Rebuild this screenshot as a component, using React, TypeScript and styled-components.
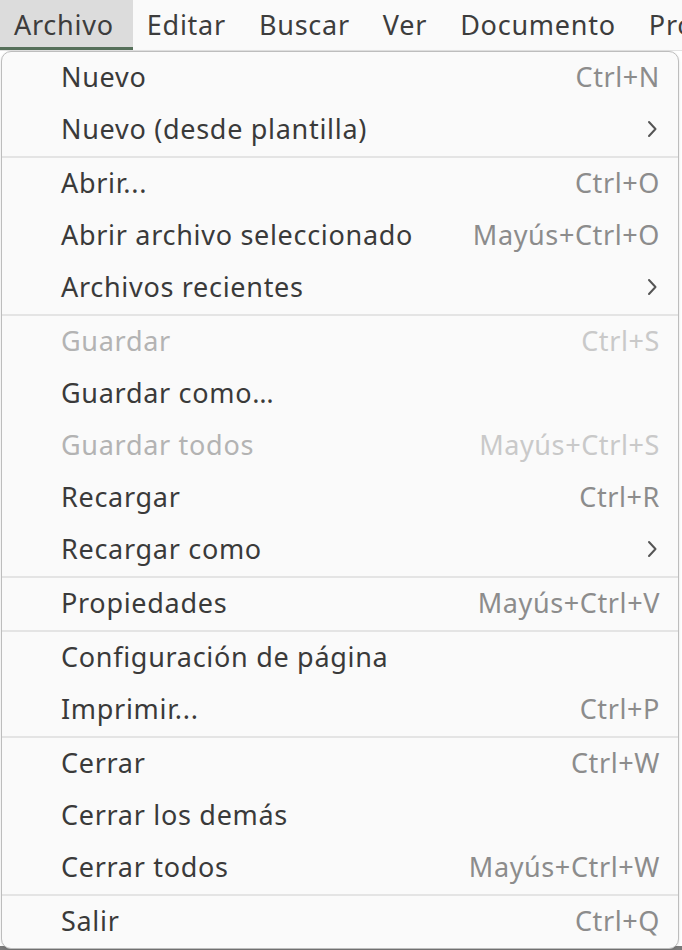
import React from 'react'
import styled, { createGlobalStyle } from 'styled-components'

const GlobalStyle = createGlobalStyle`
  html, body {
    margin: 0;
    padding: 0;
    background: #fafafa;
  }
  body {
    font-family: "Noto Sans", "Open Sans", sans-serif;
    -webkit-font-smoothing: antialiased;
  }
`

const Window = styled.div`
  position: relative;
  width: 682px;
  height: 950px;
  overflow: hidden;
  background: #fafafa;
  display: flex;
  flex-direction: column;
`

const MenuBar = styled.div`
  height: 50px;
  display: flex;
  align-items: stretch;
  background: #fafafa;
  flex-shrink: 0;
`

const BarItem = styled.div<{ $active?: boolean }>`
  display: flex;
  align-items: center;
  padding: 0 19px 2px 14px;
  font-size: 27px;
  letter-spacing: 0.75px;
  color: #3d3d3d;
  white-space: nowrap;
  background: ${(p) => (p.$active ? '#dcdcdc' : 'transparent')};
  box-shadow: ${(p) => (p.$active ? 'inset 0 -3px 0 #56705a' : 'none')};
`

const Content = styled.div`
  flex: 1;
  background: #ffffff;
  border-top: 1px solid #e2e2e2;
  display: flex;
  flex-direction: column;
  justify-content: flex-end;
`

const StatusStrip = styled.div`
  height: 4px;
  background: #7a7a7a;
`

const Menu = styled.div`
  position: absolute;
  top: 51px;
  left: 1px;
  width: 678px;
  box-sizing: border-box;
  background: #fafafa;
  border: 1px solid #bdbdbd;
  border-radius: 10px;
  box-shadow: 0 1px 3px rgba(0, 0, 0, 0.12);
  display: flex;
  flex-direction: column;
  overflow: hidden;
`

const Item = styled.div<{ $disabled?: boolean }>`
  box-sizing: border-box;
  height: 52px;
  flex-shrink: 0;
  display: flex;
  align-items: center;
  justify-content: space-between;
  padding: 0 18px 3px 59px;
  font-size: 27px;
  letter-spacing: 0.7px;
  color: ${(p) => (p.$disabled ? '#b3b3b3' : '#3a3a3a')};
  white-space: nowrap;
`

const Shortcut = styled.span<{ $disabled?: boolean }>`
  color: ${(p) => (p.$disabled ? '#c9c9c9' : '#8c8c8c')};
  letter-spacing: 0.6px;
`

const Separator = styled.div`
  height: 2px;
  flex-shrink: 0;
  background: #e4e4e4;
`

const Chevron = () => (
  <svg width="12" height="20" viewBox="0 0 12 20" style={{ marginRight: 2 }}>
    <path d="M3 3 L9.5 10 L3 17" fill="none" stroke="#555" strokeWidth="2" strokeLinecap="round" strokeLinejoin="round" />
  </svg>
)

type Entry = { label: string; shortcut?: string; sub?: boolean; disabled?: boolean } | 'sep'

const entries: Entry[] = [
  { label: 'Nuevo', shortcut: 'Ctrl+N' },
  { label: 'Nuevo (desde plantilla)', sub: true },
  'sep',
  { label: 'Abrir...', shortcut: 'Ctrl+O' },
  { label: 'Abrir archivo seleccionado', shortcut: 'Mayús+Ctrl+O' },
  { label: 'Archivos recientes', sub: true },
  'sep',
  { label: 'Guardar', shortcut: 'Ctrl+S', disabled: true },
  { label: 'Guardar como…' },
  { label: 'Guardar todos', shortcut: 'Mayús+Ctrl+S', disabled: true },
  { label: 'Recargar', shortcut: 'Ctrl+R' },
  { label: 'Recargar como', sub: true },
  'sep',
  { label: 'Propiedades', shortcut: 'Mayús+Ctrl+V' },
  'sep',
  { label: 'Configuración de página' },
  { label: 'Imprimir...', shortcut: 'Ctrl+P' },
  'sep',
  { label: 'Cerrar', shortcut: 'Ctrl+W' },
  { label: 'Cerrar los demás' },
  { label: 'Cerrar todos', shortcut: 'Mayús+Ctrl+W' },
  'sep',
  { label: 'Salir', shortcut: 'Ctrl+Q' },
]

const barItems = ['Archivo', 'Editar', 'Buscar', 'Ver', 'Documento', 'Proyecto']

export default function App() {
  return (
    <>
      <GlobalStyle />
      <Window>
        <MenuBar>
          {barItems.map((name, i) => (
            <BarItem key={name} $active={i === 0}>
              {name}
            </BarItem>
          ))}
        </MenuBar>
        <Content>
          <StatusStrip />
        </Content>
        <Menu>
          {entries.map((e, i) =>
            e === 'sep' ? (
              <Separator key={i} />
            ) : (
              <Item key={i} $disabled={e.disabled}>
                <span>{e.label}</span>
                {e.shortcut && <Shortcut $disabled={e.disabled}>{e.shortcut}</Shortcut>}
                {e.sub && <Chevron />}
              </Item>
            )
          )}
        </Menu>
      </Window>
    </>
  )
}
